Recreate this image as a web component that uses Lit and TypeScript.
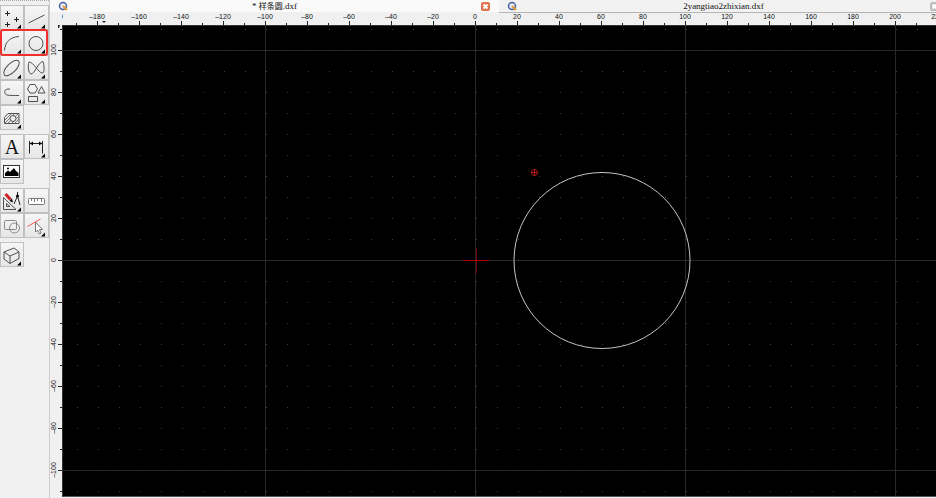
import { LitElement, html, svg, css, TemplateResult } from "lit";
import { customElement, property } from "lit/decorators.js";

/** Pixels per drawing unit and the screen position of the drawing origin. */
const SCALE = 2.1;
const ORIGIN_X = 413;
const ORIGIN_Y = 235;

interface Tool {
  label: string;
  menu: boolean;
  art: TemplateResult;
}

const GROUPS: Tool[][] = [
  [
    { label: "Point", menu: true, art: svg`<path class="dark" d="M7.500 5v5M5 7.500h5M16.500 11v5M14 13.500h5M7.500 16v5M5 18.500h5"/>` },
    { label: "Line", menu: true, art: svg`<path d="M4.500 17L20.500 9"/>` },
    { label: "Arc", menu: true, art: svg`<path d="M4.500 19.500C5 11 10 6 19 5.500"/>` },
    { label: "Circle", menu: true, art: svg`<circle cx="12" cy="12.500" r="7"/>` },
    { label: "Ellipse", menu: true, art: svg`<ellipse cx="11.500" cy="12" rx="10" ry="4.500" transform="rotate(-45 11.500 12)"/>` },
    { label: "Spline", menu: true, art: svg`<path d="M5 6C3.500 9 4.500 18 7 18C11 18 14 6 19 5.500C20 8 21 17 18.500 17C14 17 10 6 5 6Z"/>` },
    { label: "Polyline", menu: true, art: svg`<path d="M10 8C4 8 4.500 10 5 12C5.500 14.500 8 14.500 19 14.500"/>` },
    {
      label: "Shape",
      menu: true,
      art: svg`<path d="M6 3.500h5l2.500 4.500L11 12H6L3.500 8ZM17.500 5.500L21 12H14ZM4.500 15.500h9v5h-9Z"/>`,
    },
    {
      label: "Hatch",
      menu: true,
      art: svg`<path class="fill-soft" d="M4.500 11.500L8 7.500H19v10H4.500Z"/>
        <path class="thin" d="M5 14L11 8M5 17L14 8M8 17L18 8M12 17L19 10M15 17L19 13"/>
        <circle class="fill-soft" cx="13" cy="12.500" r="3"/>`,
    },
  ],
  [
    { label: "Text", menu: false, art: svg`<text class="letter" x="12" y="19" text-anchor="middle">A</text>` },
    {
      label: "Dimension",
      menu: true,
      art: svg`<path class="dark" d="M5.500 6V18.500M18.500 6V18.500M6 8.500H18"/>
        <path class="solid" d="M6 8.500l3-2v4ZM18 8.500l-3-2v4Z"/>`,
    },
    {
      label: "Image",
      menu: false,
      art: svg`<rect class="frame" x="3.500" y="5.500" width="16" height="12"/>
        <path class="solid" d="M5 16V13l3-2.500 2 1.500 4-4 2 3 2.500 2V16Z"/><circle class="solid" cx="8" cy="8.500" r="1"/>`,
    },
  ],
  [
    {
      label: "Modify",
      menu: true,
      art: svg`<path d="M3.500 8.500V20.500H16ZM6.500 14.500V17.500H10Z"/>
        <path class="pencil" d="M5.500 5L10.500 10.500"/><path class="solid" d="M13 13.500l-3.500-1.500 2.500-2.500Z"/>
        <path class="dark" d="M17.500 3v4L14 15M17.500 7L20 16"/><circle class="solid" cx="17.500" cy="7" r="1.500"/>`,
    },
    {
      label: "Measure",
      menu: false,
      art: svg`<rect class="fill-white" x="4.500" y="9.500" width="16" height="6" rx="1"/><path class="thin" d="M7.500 10v2M10.500 10v3M13.500 10v2M17.500 10v3"/>`,
    },
    {
      label: "Block",
      menu: false,
      art: svg`<rect class="muted" x="4.500" y="6.500" width="12" height="9" rx="1"/><circle class="muted" cx="14.500" cy="14" r="5"/>`,
    },
    {
      label: "Select",
      menu: true,
      art: svg`<path class="redline" d="M3.500 12.500L16.500 5"/>
        <path class="fill-white" d="M11.500 8v10l2-2 2 4 1.500-1-1.500-3.500H18.500Z"/>`,
    },
  ],
  [
    {
      label: "Solid",
      menu: true,
      art: svg`<path d="M4 9L14 5L19 9L10 13ZM4 9V16L10 20.500V13M10 20.500L19 15.500V9"/>`,
    },
  ],
];

@customElement("tool-bar")
export class ToolBar extends LitElement {
  static styles = css`
    :host { display: flex; flex-direction: column; gap: 4px; background: #f0f0f0; position: relative; }
    .grip { border-top: 1px dotted #aaa; }
    .group { display: grid; grid-template-columns: 24px 25px; grid-auto-rows: 25px; }
    .tool {
      padding: 0; margin: 0; border: 1px solid #bdbdbd; border-left-color: #fafafa; border-top-color: #fafafa;
      background: linear-gradient(#f6f6f6, #e6e6e6); display: block; overflow: hidden;
      outline: 1px solid #c0c0c0; outline-offset: -1px;
    }
    .icon { display: block; width: 24px; height: 24px; margin: -1px; fill: none; stroke: #505050; stroke-width: 1; }
    .dark { stroke: #222; }
    .muted { stroke: #888; }
    .thin { stroke: #777; }
    .frame { stroke: #333; fill: #fff; }
    .solid { fill: #000; stroke: none; }
    .fill-soft { fill: #ececec; }
    .fill-white { fill: #fff; stroke: #777; }
    .pencil { stroke: #d02020; stroke-width: 3; }
    .redline { stroke: #ff5a50; }
    .letter { font: 20px "Liberation Serif", serif; fill: #111; stroke: none; }
    .mark { position: absolute; left: 0; top: 29px; width: 48px; height: 27px; box-sizing: border-box; border: 2px solid #f0302a; border-radius: 3px; pointer-events: none; }
  `;

  render() {
    return html`
      <div class="grip"></div>
      ${GROUPS.map(
        (group) => html`<div class="group">
          ${group.map(
            (tool) => html`<button class="tool" aria-label=${tool.label}>
              <svg class="icon" viewBox="0 0 24 24">
                ${tool.art}${tool.menu ? svg`<path class="solid" d="M21 18.500V22.500H17Z"/>` : ""}
              </svg>
            </button>`
          )}
        </div>`
      )}
      <div class="mark"></div>
    `;
  }
}

@customElement("doc-tab")
export class DocTab extends LitElement {
  @property({ type: Boolean, reflect: true }) active = false;

  static styles = css`
    :host {
      display: flex; align-items: center; box-sizing: border-box; height: 13px; padding: 0 9px 0 8px;
      background: #f2f2f2; border-bottom: 1px solid #b4b4b4; font: 9px "Liberation Serif", "Noto Sans CJK SC", serif; color: #111;
    }
    :host([active]) { background: #fafafa; border-bottom-color: #f0f0f0; }
    .logo { width: 10px; height: 10px; flex: none; }
    .title { flex: 1; text-align: center; white-space: nowrap; line-height: 12px; }
    .close { flex: none; width: 9px; height: 9px; padding: 0; border: 0; border-radius: 2px; background: #bcbcbc; display: block; }
    :host([active]) .close { background: #e0714f; }
    .cross { display: block; width: 9px; height: 9px; stroke: #fff; stroke-width: 2; fill: none; }
  `;

  render() {
    return html`
      <svg class="logo" viewBox="0 0 10 10">
        <circle cx="5" cy="5" r="3.500" fill="#e8ecf4" stroke="#4a62a0" stroke-width="1.500" />
        <path d="M5 5L9 9" stroke="#e79a34" stroke-width="2" />
      </svg>
      <span class="title"><slot></slot></span>
      <button class="close" aria-label="Close">
        <svg class="cross" viewBox="0 0 9 9"><path d="M2.500 2.500l4 4M6.500 2.500l-4 4" /></svg>
      </button>
    `;
  }
}

@customElement("scale-ruler")
export class ScaleRuler extends LitElement {
  @property({ type: Boolean }) vertical = false;

  static styles = css`
    :host { display: block; background: #f0f0f0; overflow: hidden; }
    .scale { display: block; width: 100%; height: 100%; }
    .label { font: 7px "Liberation Sans", sans-serif; fill: #111; text-anchor: middle; }
    .tick { fill: #222; }
  `;

  private redraw = () => this.requestUpdate();

  connectedCallback() {
    super.connectedCallback();
    window.addEventListener("resize", this.redraw);
  }

  disconnectedCallback() {
    window.removeEventListener("resize", this.redraw);
    super.disconnectedCallback();
  }

  private mark(value: number) {
    const major = value % 20 === 0;
    const size = major ? 4 : 2;
    const text = value < 0 ? `–${-value}` : `${value}`;
    if (this.vertical) {
      const y = Math.round(ORIGIN_Y - value * SCALE);
      return svg`<rect class="tick" x=${12 - size} y=${y} width=${size} height="1"/>
        ${major ? svg`<text class="label" transform="translate(6 ${y}) rotate(-90)">${text}</text>` : ""}`;
    }
    const x = Math.round(ORIGIN_X + value * SCALE);
    return svg`<rect class="tick" x=${x} y=${12 - size} width="1" height=${size}/>
      ${major ? svg`<text class="label" x=${x} y="6">${text}</text>` : ""}`;
  }

  /** Every tenth unit whose tick or label falls inside the window. */
  private values(): number[] {
    const low = this.vertical ? (ORIGIN_Y + 30 - window.innerHeight) / SCALE : -200;
    const high = this.vertical ? 110 : (window.innerWidth - 57 - ORIGIN_X) / SCALE;
    const list: number[] = [];
    for (let v = Math.ceil(low / 10) * 10; v <= high; v += 10) list.push(v);
    return list;
  }

  render() {
    const cursor = this.vertical ? "M8 0h2l-1 3h-1Z" : "M40 8h4l-2 2Z";
    return html`<svg class="scale">${this.values().map((v) => this.mark(v))}<path class="tick" d=${cursor} /></svg>`;
  }
}

@customElement("drawing-canvas")
export class DrawingCanvas extends LitElement {
  static styles = css`
    :host { display: block; background: #000; border-top: 1px solid #333; border-left: 1px solid #333; border-bottom: 1px solid #555; overflow: hidden; min-height: 0; }
    .view { display: block; width: 100%; height: 100%; fill: none; shape-rendering: crispEdges; }
    .dot { fill: #3a3a3a; }
    .line { fill: #282828; }
    .shape { stroke: #c4c4c4; shape-rendering: auto; }
    .origin { fill: #b40000; }
    .origin-soft { fill: #700000; }
    .snap { stroke: #b01818; shape-rendering: auto; }
  `;

  render() {
    const x = ORIGIN_X - 1;
    const y = ORIGIN_Y - 1;
    const cx = x + 60 * SCALE + 1;
    const columns = [-1, 0, 1, 2, 3, 4, 5, 6];
    return html`<svg class="view">
      <defs>
        <pattern id="dots" x=${x + 1} y=${y} width="21" height="21" patternUnits="userSpaceOnUse">
          <rect class="dot" width="1" height="1" />
        </pattern>
      </defs>
      ${columns.map((n) => svg`<rect class="line" x=${x + n * 210} y="0" width="1" height="100%"/>`)}
      ${[-1, 0, 1, 2, 3].map((n) => svg`<rect class="line" x="0" y=${y + n * 210} width="100%" height="1"/>`)}
      <rect width="100%" height="100%" fill="url(#dots)" />
      <circle class="shape" cx=${Math.round(cx)} cy=${y + 0.5} r="88" />
      <rect class="origin-soft" x=${x + 1} y=${y - 12} width="1" height="25" />
      <rect class="origin" x=${x - 12} y=${y} width="26" height="1" />
      <g class="snap" transform="translate(${x + 59} ${y - 88})">
        <circle cx="0.500" cy="0.500" r="3" />
        <path d="M-3 0.500H4M0.500 -3V4" />
      </g>
    </svg>`;
  }
}

@customElement("app-root")
export class AppRoot extends LitElement {
  static styles = css`
    :host { display: flex; height: 100vh; background: #f0f0f0; overflow: hidden; }
    .tools { flex: none; width: 49px; border-right: 1px solid #ccc; }
    .workspace { flex: 1; min-width: 0; display: flex; flex-direction: column; }
    .tabs { display: flex; flex: none; }
    .tab { flex: 0 0 calc(50% + 6px); }
    .sheet { flex: 1; min-height: 0; display: grid; grid-template: 12px minmax(0, 1fr) / 12px minmax(0, 1fr); margin-bottom: 1px; }
    .cjk { font-size: 8px; }
  `;

  render() {
    return html`
      <tool-bar class="tools"></tool-bar>
      <main class="workspace">
        <nav class="tabs">
          <doc-tab class="tab" active>* <span class="cjk">样条圆</span>.dxf</doc-tab>
          <doc-tab class="tab">2yangtiao2zhixian.dxf</doc-tab>
        </nav>
        <div class="sheet">
          <div></div>
          <scale-ruler></scale-ruler>
          <scale-ruler vertical></scale-ruler>
          <drawing-canvas></drawing-canvas>
        </div>
      </main>
    `;
  }
}
